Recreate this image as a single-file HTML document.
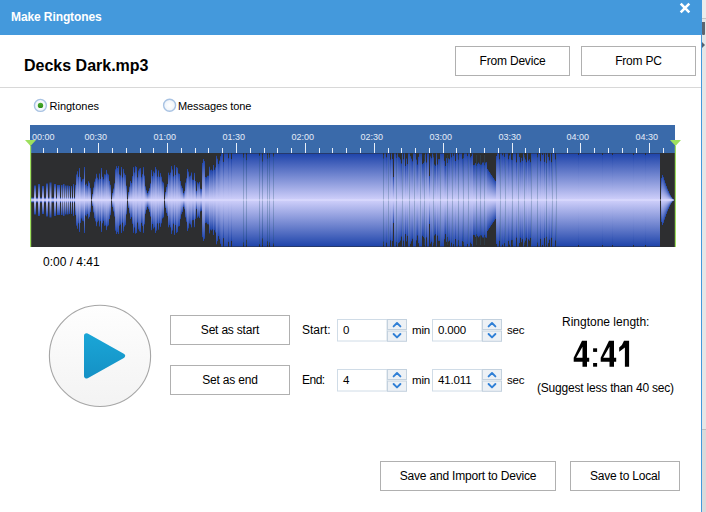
<!DOCTYPE html>
<html><head><meta charset="utf-8">
<style>
*{box-sizing:border-box;margin:0;padding:0}
html,body{width:706px;height:512px;overflow:hidden;background:#fff}
body{position:relative;font-family:"Liberation Sans",sans-serif;color:#000}
.a{position:absolute;white-space:nowrap}
.title{left:0;top:0;width:702px;height:35px;background:#4499dc}
.title .t{left:11px;top:11px;font-size:12px;font-weight:bold;letter-spacing:-0.1px;color:#fff;line-height:12px}
.bg{left:702px;top:0;width:4px;height:512px;background:#e6e6e6}
.bord{left:701px;top:35px;width:1px;height:477px;background:#4499dc}
.btn{position:absolute;border:1px solid #b0b0b0;background:#fff;font-size:12px;text-align:center;color:#000;letter-spacing:-0.2px}
.sep{left:0;top:87px;width:701px;height:1px;background:#d8d8d8}
.radio{position:absolute;width:13px;height:13px;border-radius:50%;border:1px solid #8fa7c8;background:#fff}
.spin{position:absolute;width:70px;height:22px;border:1px solid #c9d6e2;background:#fff}
.spin .v{position:absolute;left:5px;top:4px;font-size:12px;line-height:13px}
.up,.dn{position:absolute;left:49px;width:20px;height:10px;background:#eef1f4;border:1px solid #cdd7e0}
.up{top:0}.dn{top:11px}
.lbl{font-size:12px;line-height:13px}
</style></head><body>
<div class="a bg"></div>
<div class="a" style="left:702px;top:0;width:4px;height:18px;background:#ececec"></div>
<div class="a" style="left:702px;top:18px;width:4px;height:1px;background:#c4c4c4"></div>
<div class="a" style="left:702px;top:22px;width:2.5px;height:13px;background:#5c6570;border-radius:0 0 1px 1px"></div>
<div class="a" style="left:702px;top:42px;width:0;height:0;border-top:3px solid transparent;border-bottom:3px solid transparent;border-left:3px solid #56606c"></div>
<div class="a" style="left:702px;top:429px;width:4px;height:1px;background:#bdbdbd"></div>
<div class="a" style="left:702px;top:430px;width:4px;height:82px;background:#dadada"></div>
<div class="a title"><div class="a t">Make Ringtones</div>
<svg class="a" style="left:679.2px;top:2.4px" width="12" height="12" viewBox="0 0 12 12"><path d="M1.7,1.7 L10.3,10.3 M10.3,1.7 L1.7,10.3" stroke="#fff" stroke-width="2.6"/></svg>
</div>
<div class="a bord"></div>
<div class="a" style="left:24px;top:58px;font-size:16px;font-weight:bold;line-height:16px">Decks Dark.mp3</div>
<div class="btn" style="left:455px;top:46px;width:115px;height:30px;line-height:28px">From Device</div>
<div class="btn" style="left:581px;top:46px;width:115px;height:30px;line-height:28px">From PC</div>
<div class="a sep"></div>
<svg class="a" style="left:0;top:90px" width="200" height="30" viewBox="0 90 200 30">
<defs><radialGradient id="rg" cx="0.5" cy="0.5" r="0.5"><stop offset="0" stop-color="#fff"/><stop offset="1" stop-color="#eef3f9"/></radialGradient>
<linearGradient id="gd" x1="0" y1="0" x2="0" y2="1"><stop offset="0" stop-color="#4cb030"/><stop offset="1" stop-color="#2e8c18"/></linearGradient></defs>
<circle cx="40.4" cy="105.4" r="6" fill="url(#rg)" stroke="#a9c3e3" stroke-width="1.4"/>
<circle cx="40.5" cy="105.4" r="2.7" fill="url(#gd)"/>
<circle cx="169.6" cy="105.3" r="6" fill="url(#rg)" stroke="#a9c3e3" stroke-width="1.4"/>
</svg>
<div class="a lbl" style="left:49.5px;top:100px;font-size:11px">Ringtones</div>
<div class="a lbl" style="left:178px;top:100px;font-size:11px;letter-spacing:-0.1px">Messages tone</div>
<svg width="706" height="512" style="position:absolute;left:0;top:0">
<rect x="30" y="125" width="645" height="28" fill="#3a6aaa"/>
<rect x="43" y="148" width="1" height="5" fill="#e8eef8"/><rect x="57" y="148" width="1" height="5" fill="#e8eef8"/><rect x="71" y="148" width="1" height="5" fill="#e8eef8"/><rect x="84" y="148" width="1" height="5" fill="#e8eef8"/><rect x="98" y="143" width="1" height="10" fill="#e8eef8"/><rect x="112" y="148" width="1" height="5" fill="#e8eef8"/><rect x="126" y="148" width="1" height="5" fill="#e8eef8"/><rect x="140" y="148" width="1" height="5" fill="#e8eef8"/><rect x="153" y="148" width="1" height="5" fill="#e8eef8"/><rect x="167" y="143" width="1" height="10" fill="#e8eef8"/><rect x="181" y="148" width="1" height="5" fill="#e8eef8"/><rect x="195" y="148" width="1" height="5" fill="#e8eef8"/><rect x="208" y="148" width="1" height="5" fill="#e8eef8"/><rect x="222" y="148" width="1" height="5" fill="#e8eef8"/><rect x="236" y="143" width="1" height="10" fill="#e8eef8"/><rect x="250" y="148" width="1" height="5" fill="#e8eef8"/><rect x="264" y="148" width="1" height="5" fill="#e8eef8"/><rect x="277" y="148" width="1" height="5" fill="#e8eef8"/><rect x="291" y="148" width="1" height="5" fill="#e8eef8"/><rect x="305" y="143" width="1" height="10" fill="#e8eef8"/><rect x="319" y="148" width="1" height="5" fill="#e8eef8"/><rect x="332" y="148" width="1" height="5" fill="#e8eef8"/><rect x="346" y="148" width="1" height="5" fill="#e8eef8"/><rect x="360" y="148" width="1" height="5" fill="#e8eef8"/><rect x="374" y="143" width="1" height="10" fill="#e8eef8"/><rect x="388" y="148" width="1" height="5" fill="#e8eef8"/><rect x="401" y="148" width="1" height="5" fill="#e8eef8"/><rect x="415" y="148" width="1" height="5" fill="#e8eef8"/><rect x="429" y="148" width="1" height="5" fill="#e8eef8"/><rect x="443" y="143" width="1" height="10" fill="#e8eef8"/><rect x="456" y="148" width="1" height="5" fill="#e8eef8"/><rect x="470" y="148" width="1" height="5" fill="#e8eef8"/><rect x="484" y="148" width="1" height="5" fill="#e8eef8"/><rect x="498" y="148" width="1" height="5" fill="#e8eef8"/><rect x="512" y="143" width="1" height="10" fill="#e8eef8"/><rect x="525" y="148" width="1" height="5" fill="#e8eef8"/><rect x="539" y="148" width="1" height="5" fill="#e8eef8"/><rect x="553" y="148" width="1" height="5" fill="#e8eef8"/><rect x="567" y="148" width="1" height="5" fill="#e8eef8"/><rect x="580" y="143" width="1" height="10" fill="#e8eef8"/><rect x="594" y="148" width="1" height="5" fill="#e8eef8"/><rect x="608" y="148" width="1" height="5" fill="#e8eef8"/><rect x="622" y="148" width="1" height="5" fill="#e8eef8"/><rect x="636" y="148" width="1" height="5" fill="#e8eef8"/><rect x="649" y="143" width="1" height="10" fill="#e8eef8"/><rect x="663" y="148" width="1" height="5" fill="#e8eef8"/>
<g font-family="Liberation Sans" font-size="9" fill="#e4ecf8"><text x="32" y="140">00:00</text><text x="84.5" y="140">00:30</text><text x="153.5" y="140">01:00</text><text x="222.5" y="140">01:30</text><text x="291.5" y="140">02:00</text><text x="360.5" y="140">02:30</text><text x="429.5" y="140">03:00</text><text x="498.5" y="140">03:30</text><text x="566.5" y="140">04:00</text><text x="635.5" y="140">04:30</text></g>




</svg>
<svg width="706" height="512" style="position:absolute;left:0;top:0">
<defs><linearGradient id="wg" x1="0" y1="0" x2="0" y2="1">
<stop offset="0" stop-color="#1e44aa"/><stop offset="0.5" stop-color="#d0d0fb"/><stop offset="1" stop-color="#1e44aa"/></linearGradient></defs>
<rect x="30" y="153" width="645" height="94" fill="#2d2e30"/>
<g fill="url(#wg)"><rect x="31" y="197.5" width="44" height="5.0"/><rect x="75" y="184.9" width="1" height="30.2"/><rect x="76" y="174.4" width="1" height="51.3"/><rect x="77" y="171.2" width="1" height="57.6"/><rect x="78" y="176.8" width="1" height="46.5"/><rect x="79" y="168.0" width="1" height="64.0"/><rect x="80" y="177.0" width="1" height="46.0"/><rect x="81" y="181.5" width="1" height="37.0"/><rect x="82" y="179.1" width="1" height="41.7"/><rect x="83" y="178.8" width="1" height="42.4"/><rect x="84" y="167.0" width="1" height="66.0"/><rect x="85" y="184.7" width="1" height="30.7"/><rect x="86" y="183.6" width="1" height="32.8"/><rect x="87" y="185.9" width="1" height="28.3"/><rect x="88" y="181.2" width="1" height="37.5"/><rect x="89" y="182.8" width="1" height="34.3"/><rect x="90" y="187.9" width="1" height="24.2"/><rect x="92" y="194.0" width="1" height="12.0"/><rect x="93" y="187.5" width="1" height="24.9"/><rect x="94" y="181.7" width="1" height="36.5"/><rect x="95" y="178.6" width="1" height="42.8"/><rect x="96" y="173.8" width="1" height="52.4"/><rect x="97" y="177.7" width="1" height="44.5"/><rect x="98" y="179.4" width="1" height="41.3"/><rect x="99" y="173.5" width="1" height="53.0"/><rect x="100" y="178.9" width="1" height="42.3"/><rect x="101" y="168.0" width="1" height="64.0"/><rect x="102" y="176.8" width="1" height="46.5"/><rect x="103" y="179.2" width="1" height="41.6"/><rect x="104" y="174.2" width="1" height="51.6"/><rect x="105" y="174.5" width="1" height="51.0"/><rect x="106" y="169.9" width="1" height="60.2"/><rect x="107" y="173.6" width="1" height="52.8"/><rect x="108" y="174.6" width="1" height="50.8"/><rect x="109" y="180.9" width="1" height="38.1"/><rect x="110" y="184.8" width="1" height="30.4"/><rect x="112" y="193.0" width="1" height="14.0"/><rect x="113" y="188.5" width="1" height="23.0"/><rect x="114" y="183.3" width="1" height="33.3"/><rect x="115" y="169.3" width="1" height="61.4"/><rect x="116" y="166.1" width="1" height="67.9"/><rect x="117" y="168.0" width="1" height="64.1"/><rect x="118" y="166.0" width="1" height="68.0"/><rect x="119" y="174.4" width="1" height="51.3"/><rect x="120" y="175.4" width="1" height="49.2"/><rect x="121" y="167.0" width="1" height="66.0"/><rect x="122" y="177.4" width="1" height="45.3"/><rect x="123" y="168.9" width="1" height="62.3"/><rect x="124" y="173.3" width="1" height="53.3"/><rect x="125" y="174.9" width="1" height="50.3"/><rect x="126" y="185.7" width="1" height="28.7"/><rect x="128" y="192.0" width="1" height="16.0"/><rect x="129" y="186.7" width="1" height="26.6"/><rect x="130" y="181.0" width="1" height="38.0"/><rect x="131" y="182.9" width="1" height="34.3"/><rect x="132" y="176.1" width="1" height="47.7"/><rect x="133" y="167.1" width="1" height="65.8"/><rect x="134" y="172.5" width="1" height="55.0"/><rect x="135" y="166.2" width="1" height="67.5"/><rect x="136" y="167.0" width="1" height="66.0"/><rect x="137" y="177.3" width="1" height="45.3"/><rect x="138" y="170.5" width="1" height="58.9"/><rect x="139" y="168.7" width="1" height="62.6"/><rect x="140" y="168.0" width="1" height="64.0"/><rect x="141" y="177.2" width="1" height="45.7"/><rect x="142" y="174.2" width="1" height="51.7"/><rect x="143" y="167.1" width="1" height="65.8"/><rect x="144" y="175.6" width="1" height="48.8"/><rect x="145" y="186.3" width="1" height="27.5"/><rect x="146" y="190.2" width="1" height="19.7"/><rect x="147" y="193.0" width="1" height="14.0"/><rect x="148" y="191.0" width="1" height="18.0"/><rect x="149" y="188.1" width="1" height="23.9"/><rect x="150" y="183.4" width="1" height="33.2"/><rect x="151" y="169.9" width="1" height="60.3"/><rect x="152" y="176.1" width="1" height="47.9"/><rect x="153" y="171.4" width="1" height="57.2"/><rect x="154" y="172.8" width="1" height="54.5"/><rect x="155" y="167.0" width="1" height="66.0"/><rect x="156" y="169.3" width="1" height="61.4"/><rect x="157" y="176.6" width="1" height="46.8"/><rect x="158" y="170.4" width="1" height="59.3"/><rect x="159" y="176.8" width="1" height="46.4"/><rect x="160" y="173.1" width="1" height="53.8"/><rect x="161" y="176.7" width="1" height="46.6"/><rect x="162" y="181.5" width="1" height="37.0"/><rect x="163" y="182.6" width="1" height="34.9"/><rect x="165" y="192.0" width="1" height="16.0"/><rect x="166" y="186.9" width="1" height="26.2"/><rect x="167" y="184.0" width="1" height="32.0"/><rect x="168" y="172.6" width="1" height="54.7"/><rect x="169" y="174.9" width="1" height="50.2"/><rect x="170" y="172.6" width="1" height="54.8"/><rect x="171" y="166.0" width="1" height="68.0"/><rect x="172" y="169.5" width="1" height="61.0"/><rect x="173" y="176.3" width="1" height="47.4"/><rect x="174" y="165.1" width="1" height="69.8"/><rect x="175" y="174.9" width="1" height="50.2"/><rect x="176" y="167.0" width="1" height="66.0"/><rect x="177" y="167.8" width="1" height="64.3"/><rect x="178" y="173.4" width="1" height="53.2"/><rect x="179" y="173.8" width="1" height="52.3"/><rect x="180" y="181.0" width="1" height="38.1"/><rect x="181" y="185.6" width="1" height="28.7"/><rect x="182" y="188.0" width="1" height="24.0"/><rect x="183" y="193.0" width="1" height="14.0"/><rect x="184" y="190.9" width="1" height="18.3"/><rect x="185" y="182.6" width="1" height="34.8"/><rect x="186" y="178.3" width="1" height="43.5"/><rect x="187" y="169.0" width="1" height="62.0"/><rect x="188" y="171.6" width="1" height="56.8"/><rect x="189" y="176.5" width="1" height="47.0"/><rect x="190" y="175.6" width="1" height="48.9"/><rect x="191" y="172.5" width="1" height="54.9"/><rect x="192" y="179.6" width="1" height="40.7"/><rect x="193" y="179.9" width="1" height="40.2"/><rect x="194" y="172.9" width="1" height="54.3"/><rect x="195" y="181.0" width="1" height="37.9"/><rect x="196" y="190.8" width="1" height="18.3"/><rect x="197" y="182.2" width="1" height="35.6"/><rect x="198" y="183.4" width="1" height="33.2"/><rect x="199" y="181.9" width="1" height="36.2"/><rect x="200" y="188.6" width="1" height="22.8"/><rect x="201" y="189.1" width="1" height="21.7"/><rect x="202" y="162.9" width="1" height="74.3"/><rect x="203" y="159.0" width="1" height="82.0"/><rect x="204" y="161.1" width="1" height="77.7"/><rect x="205" y="177.0" width="1" height="46.1"/><rect x="206" y="177.3" width="1" height="45.4"/><rect x="207" y="175.8" width="1" height="48.4"/><rect x="208" y="175.7" width="1" height="48.7"/><rect x="209" y="166.7" width="1" height="66.7"/><rect x="210" y="170.2" width="1" height="59.5"/><rect x="211" y="169.5" width="1" height="61.0"/><rect x="212" y="170.5" width="1" height="59.0"/><rect x="213" y="165.0" width="1" height="70.0"/><rect x="214" y="169.8" width="1" height="60.4"/><rect x="215" y="167.4" width="1" height="65.1"/><rect x="216" y="155.8" width="1" height="88.5"/><rect x="217" y="158.7" width="1" height="82.5"/><rect x="218" y="163.9" width="1" height="72.2"/><rect x="219" y="160.6" width="1" height="78.7"/><rect x="220" y="156.2" width="1" height="87.6"/><rect x="221" y="153.5" width="2" height="93.0"/><rect x="223" y="161.9" width="1" height="76.3"/><rect x="224" y="153.5" width="4" height="93.0"/><rect x="228" y="158.2" width="1" height="83.6"/><rect x="229" y="153.5" width="2" height="93.0"/><rect x="231" y="159.1" width="1" height="81.8"/><rect x="232" y="153.5" width="11" height="93.0"/><rect x="243" y="157.6" width="1" height="84.8"/><rect x="244" y="153.5" width="2" height="93.0"/><rect x="246" y="160.1" width="1" height="79.8"/><rect x="247" y="153.5" width="12" height="93.0"/><rect x="259" y="156.0" width="1" height="88.0"/><rect x="260" y="153.5" width="2" height="93.0"/><rect x="262" y="161.5" width="1" height="76.9"/><rect x="263" y="153.5" width="4" height="93.0"/><rect x="267" y="158.7" width="1" height="82.6"/><rect x="268" y="153.5" width="1" height="93.0"/><rect x="269" y="157.6" width="1" height="84.8"/><rect x="270" y="153.5" width="3" height="93.0"/><rect x="273" y="156.6" width="1" height="86.8"/><rect x="274" y="153.5" width="109" height="93.0"/><rect x="383" y="158.5" width="1" height="83.1"/><rect x="384" y="153.5" width="2" height="93.0"/><rect x="386" y="157.3" width="1" height="85.4"/><rect x="387" y="153.5" width="3" height="93.0"/><rect x="390" y="159.6" width="1" height="80.8"/><rect x="391" y="153.5" width="1" height="93.0"/><rect x="392" y="159.0" width="1" height="82.1"/><rect x="393" y="177.0" width="1" height="46.0"/><rect x="394" y="153.5" width="2" height="93.0"/><rect x="396" y="157.9" width="1" height="84.2"/><rect x="397" y="153.5" width="1" height="93.0"/><rect x="398" y="156.8" width="1" height="86.4"/><rect x="399" y="157.7" width="1" height="84.5"/><rect x="400" y="159.4" width="1" height="81.2"/><rect x="401" y="163.5" width="1" height="73.1"/><rect x="402" y="153.5" width="1" height="93.0"/><rect x="403" y="159.2" width="1" height="81.5"/><rect x="404" y="153.5" width="1" height="93.0"/><rect x="405" y="165.9" width="1" height="68.2"/><rect x="406" y="158.5" width="1" height="82.9"/><rect x="407" y="164.1" width="1" height="71.7"/><rect x="408" y="153.5" width="2" height="93.0"/><rect x="410" y="156.2" width="1" height="87.6"/><rect x="411" y="158.7" width="1" height="82.6"/><rect x="412" y="161.3" width="1" height="77.5"/><rect x="413" y="153.5" width="3" height="93.0"/><rect x="416" y="159.6" width="1" height="80.8"/><rect x="417" y="164.5" width="1" height="71.0"/><rect x="418" y="156.8" width="1" height="86.4"/><rect x="419" y="153.5" width="3" height="93.0"/><rect x="422" y="164.1" width="1" height="71.7"/><rect x="423" y="163.0" width="1" height="74.1"/><rect x="424" y="161.4" width="1" height="77.1"/><rect x="425" y="153.5" width="1" height="93.0"/><rect x="426" y="162.5" width="1" height="74.9"/><rect x="427" y="153.5" width="2" height="93.0"/><rect x="429" y="176.0" width="1" height="48.0"/><rect x="430" y="156.4" width="1" height="87.2"/><rect x="431" y="158.2" width="1" height="83.6"/><rect x="432" y="153.5" width="1" height="93.0"/><rect x="433" y="157.3" width="1" height="85.4"/><rect x="434" y="164.5" width="1" height="71.0"/><rect x="435" y="165.7" width="1" height="68.5"/><rect x="436" y="153.5" width="1" height="93.0"/><rect x="437" y="164.5" width="1" height="71.1"/><rect x="438" y="159.1" width="2" height="81.8"/><rect x="440" y="153.5" width="4" height="93.0"/><rect x="444" y="160.8" width="1" height="78.5"/><rect x="445" y="165.9" width="1" height="68.2"/><rect x="446" y="158.1" width="1" height="83.7"/><rect x="447" y="163.0" width="1" height="74.0"/><rect x="448" y="158.3" width="1" height="83.3"/><rect x="449" y="159.2" width="1" height="81.5"/><rect x="450" y="153.5" width="1" height="93.0"/><rect x="451" y="157.3" width="1" height="85.4"/><rect x="452" y="153.5" width="1" height="93.0"/><rect x="453" y="155.7" width="1" height="88.5"/><rect x="454" y="153.5" width="1" height="93.0"/><rect x="455" y="161.0" width="1" height="78.0"/><rect x="456" y="153.5" width="2" height="93.0"/><rect x="458" y="159.7" width="1" height="80.5"/><rect x="459" y="153.5" width="3" height="93.0"/><rect x="462" y="158.8" width="1" height="82.3"/><rect x="463" y="158.1" width="1" height="83.9"/><rect x="464" y="153.5" width="3" height="93.0"/><rect x="467" y="156.1" width="1" height="87.8"/><rect x="468" y="153.5" width="2" height="93.0"/><rect x="470" y="157.3" width="1" height="85.4"/><rect x="471" y="156.0" width="1" height="88.0"/><rect x="472" y="153.5" width="1" height="93.0"/><rect x="473" y="165.1" width="1" height="69.8"/><rect x="474" y="164.8" width="1" height="70.3"/><rect x="475" y="163.1" width="1" height="73.8"/><rect x="476" y="165.7" width="1" height="68.6"/><rect x="477" y="163.9" width="1" height="72.2"/><rect x="478" y="162.6" width="1" height="74.7"/><rect x="479" y="163.8" width="1" height="72.5"/><rect x="480" y="164.8" width="1" height="70.5"/><rect x="481" y="164.5" width="1" height="71.0"/><rect x="482" y="162.6" width="1" height="74.8"/><rect x="483" y="162.4" width="1" height="75.2"/><rect x="484" y="165.2" width="1" height="69.7"/><rect x="485" y="162.6" width="1" height="74.8"/><rect x="486" y="162.1" width="1" height="75.7"/><rect x="487" y="169.0" width="1" height="62.0"/><rect x="488" y="170.5" width="1" height="59.0"/><rect x="489" y="172.0" width="1" height="56.0"/><rect x="490" y="173.5" width="1" height="53.0"/><rect x="491" y="175.0" width="1" height="50.0"/><rect x="492" y="176.5" width="1" height="47.0"/><rect x="493" y="178.0" width="1" height="44.0"/><rect x="494" y="179.5" width="1" height="41.0"/><rect x="495" y="181.0" width="1" height="38.0"/><rect x="496" y="156.0" width="1" height="88.0"/><rect x="497" y="153.5" width="2" height="93.0"/><rect x="499" y="159.2" width="1" height="81.6"/><rect x="500" y="153.5" width="2" height="93.0"/><rect x="502" y="155.3" width="1" height="89.4"/><rect x="503" y="153.5" width="1" height="93.0"/><rect x="504" y="156.8" width="1" height="86.4"/><rect x="505" y="153.5" width="3" height="93.0"/><rect x="508" y="159.2" width="1" height="81.7"/><rect x="509" y="155.4" width="1" height="89.2"/><rect x="510" y="153.5" width="1" height="93.0"/><rect x="511" y="159.7" width="1" height="80.5"/><rect x="512" y="160.1" width="1" height="79.8"/><rect x="513" y="153.5" width="3" height="93.0"/><rect x="516" y="162.3" width="1" height="75.4"/><rect x="517" y="153.5" width="2" height="93.0"/><rect x="519" y="157.0" width="1" height="86.0"/><rect x="520" y="162.3" width="1" height="75.5"/><rect x="521" y="157.8" width="1" height="84.4"/><rect x="522" y="160.8" width="1" height="78.4"/><rect x="523" y="153.5" width="1" height="93.0"/><rect x="524" y="157.4" width="1" height="85.2"/><rect x="525" y="159.4" width="1" height="81.2"/><rect x="526" y="162.2" width="1" height="75.6"/><rect x="527" y="153.5" width="1" height="93.0"/><rect x="528" y="160.6" width="1" height="78.8"/><rect x="529" y="159.2" width="1" height="81.5"/><rect x="530" y="162.2" width="1" height="75.7"/><rect x="531" y="153.5" width="6" height="93.0"/><rect x="537" y="157.3" width="1" height="85.3"/><rect x="538" y="153.5" width="2" height="93.0"/><rect x="540" y="161.2" width="1" height="77.7"/><rect x="541" y="153.5" width="1" height="93.0"/><rect x="542" y="155.0" width="1" height="90.0"/><rect x="543" y="153.5" width="1" height="93.0"/><rect x="544" y="161.8" width="1" height="76.3"/><rect x="545" y="153.5" width="1" height="93.0"/><rect x="546" y="163.1" width="1" height="73.7"/><rect x="547" y="153.5" width="1" height="93.0"/><rect x="548" y="156.9" width="1" height="86.2"/><rect x="549" y="160.4" width="1" height="79.3"/><rect x="550" y="153.5" width="1" height="93.0"/><rect x="551" y="162.2" width="1" height="75.6"/><rect x="552" y="153.5" width="3" height="93.0"/><rect x="555" y="159.4" width="1" height="81.1"/><rect x="556" y="153.5" width="22" height="93.0"/><rect x="578" y="155.0" width="1" height="90.0"/><rect x="579" y="153.5" width="23" height="93.0"/><rect x="602" y="155.0" width="1" height="90.0"/><rect x="603" y="153.5" width="9" height="93.0"/><rect x="612" y="155.0" width="1" height="90.0"/><rect x="613" y="153.5" width="20" height="93.0"/><rect x="633" y="155.0" width="1" height="90.0"/><rect x="634" y="153.5" width="11" height="93.0"/><rect x="645" y="155.0" width="1" height="90.0"/><rect x="646" y="153.5" width="14" height="93.0"/><rect x="660" y="200.0" width="1" height="0.0"/><rect x="661" y="178.0" width="1" height="44.0"/><rect x="662" y="175.0" width="1" height="50.0"/><rect x="663" y="177.1" width="1" height="45.8"/><rect x="664" y="180.2" width="1" height="39.5"/><rect x="665" y="183.2" width="1" height="33.6"/><rect x="666" y="186.0" width="1" height="28.0"/><rect x="667" y="188.6" width="1" height="22.8"/><rect x="668" y="191.0" width="1" height="18.0"/><rect x="669" y="193.2" width="1" height="13.6"/><rect x="670" y="195.2" width="1" height="9.6"/><rect x="671" y="196.9" width="1" height="6.2"/><rect x="672" y="198.3" width="1" height="3.4"/><rect x="673" y="199.3" width="1" height="1.5"/><rect x="34" y="185.5" width="2" height="29.0"/><rect x="38" y="184.0" width="2" height="32.0"/><rect x="42" y="186.0" width="2" height="28.0"/><rect x="46" y="183.5" width="2" height="33.0"/><rect x="49.5" y="182.5" width="2" height="35.0"/><rect x="54" y="184.0" width="2" height="32.0"/><rect x="57" y="185.0" width="3" height="30.0"/><rect x="61" y="185.0" width="1.5" height="30.0"/><rect x="63" y="184.0" width="1.5" height="32.0"/><rect x="65" y="185.5" width="1.5" height="29.0"/><rect x="67" y="185.5" width="1.5" height="29.0"/><rect x="69" y="186.0" width="1" height="28.0"/><rect x="71" y="186.0" width="1" height="28.0"/><rect x="73" y="184.0" width="1" height="32.0"/></g>
<g fill="#335f7c" opacity="0.3"><rect x="243" y="155" width="1" height="90"/><rect x="246" y="155" width="1" height="90"/><rect x="259" y="155" width="1" height="90"/><rect x="262" y="155" width="1" height="90"/><rect x="267" y="155" width="1" height="90"/><rect x="269" y="155" width="1" height="90"/><rect x="273" y="155" width="1" height="90"/><rect x="383" y="155" width="1" height="90"/><rect x="388" y="155" width="1" height="90"/><rect x="396" y="155" width="1" height="90"/><rect x="402" y="155" width="1" height="90"/><rect x="409" y="155" width="1" height="90"/><rect x="414" y="155" width="1" height="90"/><rect x="420" y="155" width="1" height="90"/><rect x="424" y="155" width="1" height="90"/><rect x="433" y="155" width="1" height="90"/><rect x="440" y="155" width="1" height="90"/><rect x="447" y="155" width="1" height="90"/><rect x="452" y="155" width="1" height="90"/><rect x="458" y="155" width="1" height="90"/><rect x="463" y="155" width="1" height="90"/><rect x="468" y="155" width="1" height="90"/><rect x="476" y="155" width="1" height="90"/><rect x="480" y="155" width="1" height="90"/><rect x="484" y="155" width="1" height="90"/><rect x="500" y="155" width="1" height="90"/><rect x="505" y="155" width="1" height="90"/><rect x="512" y="155" width="1" height="90"/><rect x="518" y="155" width="1" height="90"/><rect x="524" y="155" width="1" height="90"/><rect x="531" y="155" width="1" height="90"/><rect x="537" y="155" width="1" height="90"/><rect x="546" y="155" width="1" height="90"/><rect x="552" y="155" width="1" height="90"/><rect x="556" y="155" width="1" height="90"/></g>
<rect x="31" y="199.5" width="643" height="1" fill="#e6e6ff" opacity="0.7"/>
<rect x="30" y="146" width="1.2" height="101" fill="#9ee05e"/>
<rect x="674.8" y="146" width="1.2" height="101" fill="#9ee05e"/>
<path d="M25,140 L36,140 L30.5,146 Z" fill="#9ee05e"/>
<path d="M670,140 L681,140 L675.5,146 Z" fill="#9ee05e"/>
</svg>
<div class="a lbl" style="left:43px;top:256px">0:00 / 4:41</div>
<svg class="a" style="left:45px;top:301px" width="110" height="110" viewBox="0 0 110 110">
<defs><linearGradient id="pb" x1="0" y1="0" x2="0" y2="1"><stop offset="0" stop-color="#fefefe"/><stop offset="1" stop-color="#f3f3f3"/></linearGradient>
<linearGradient id="tri" x1="0" y1="0" x2="0" y2="1"><stop offset="0" stop-color="#1aa5d6"/><stop offset="1" stop-color="#1592c6"/></linearGradient></defs>
<circle cx="55" cy="54.9" r="50.6" fill="url(#pb)" stroke="#a6a6a6" stroke-width="1.1"/>
<path d="M41.5,34.8 L77.6,54.9 L41.5,75 Z" fill="url(#tri)" stroke="url(#tri)" stroke-width="5" stroke-linejoin="round"/>
</svg>
<div class="btn" style="left:170px;top:315px;width:120px;height:30px;line-height:28px">Set as start</div>
<div class="btn" style="left:170px;top:365px;width:120px;height:30px;line-height:28px">Set as end</div>
<div class="a lbl" style="left:302px;top:324px">Start:</div>
<div class="a lbl" style="left:302px;top:374px;letter-spacing:-0.5px">End:</div>
<svg class="a" style="left:337px;top:319px" width="70" height="23" viewBox="0 0 70 23">
<rect x="0.5" y="0.5" width="49.5" height="21.5" fill="#fff" stroke="#d0dce7"/>
<rect x="50.5" y="0.5" width="19" height="10" fill="#edf1f5" stroke="#c3d1de"/>
<rect x="50.5" y="12" width="19" height="10.3" fill="#edf1f5" stroke="#c3d1de"/>
<polyline points="56.6,7.4 60,4 63.4,7.4" fill="none" stroke="#2f7fd6" stroke-width="1.9" stroke-linecap="round" stroke-linejoin="round"/>
<polyline points="56.6,15 60,18.4 63.4,15" fill="none" stroke="#2f7fd6" stroke-width="1.9" stroke-linecap="round" stroke-linejoin="round"/>
</svg><div class="a lbl" style="left:343px;top:324px;font-size:11.5px;letter-spacing:-0.15px">0</div>
<div class="a lbl" style="left:412px;top:324px;font-size:11.5px;letter-spacing:-0.15px">min</div>
<svg class="a" style="left:432px;top:319px" width="70" height="23" viewBox="0 0 70 23">
<rect x="0.5" y="0.5" width="49.5" height="21.5" fill="#fff" stroke="#d0dce7"/>
<rect x="50.5" y="0.5" width="19" height="10" fill="#edf1f5" stroke="#c3d1de"/>
<rect x="50.5" y="12" width="19" height="10.3" fill="#edf1f5" stroke="#c3d1de"/>
<polyline points="56.6,7.4 60,4 63.4,7.4" fill="none" stroke="#2f7fd6" stroke-width="1.9" stroke-linecap="round" stroke-linejoin="round"/>
<polyline points="56.6,15 60,18.4 63.4,15" fill="none" stroke="#2f7fd6" stroke-width="1.9" stroke-linecap="round" stroke-linejoin="round"/>
</svg><div class="a lbl" style="left:438px;top:324px;font-size:11.5px;letter-spacing:-0.15px">0.000</div>
<div class="a lbl" style="left:507px;top:324px;font-size:11.5px;letter-spacing:-0.15px">sec</div>
<svg class="a" style="left:337px;top:369px" width="70" height="23" viewBox="0 0 70 23">
<rect x="0.5" y="0.5" width="49.5" height="21.5" fill="#fff" stroke="#d0dce7"/>
<rect x="50.5" y="0.5" width="19" height="10" fill="#edf1f5" stroke="#c3d1de"/>
<rect x="50.5" y="12" width="19" height="10.3" fill="#edf1f5" stroke="#c3d1de"/>
<polyline points="56.6,7.4 60,4 63.4,7.4" fill="none" stroke="#2f7fd6" stroke-width="1.9" stroke-linecap="round" stroke-linejoin="round"/>
<polyline points="56.6,15 60,18.4 63.4,15" fill="none" stroke="#2f7fd6" stroke-width="1.9" stroke-linecap="round" stroke-linejoin="round"/>
</svg><div class="a lbl" style="left:343px;top:374px;font-size:11.5px;letter-spacing:-0.15px">4</div>
<div class="a lbl" style="left:412px;top:374px;font-size:11.5px;letter-spacing:-0.15px">min</div>
<svg class="a" style="left:432px;top:369px" width="70" height="23" viewBox="0 0 70 23">
<rect x="0.5" y="0.5" width="49.5" height="21.5" fill="#fff" stroke="#d0dce7"/>
<rect x="50.5" y="0.5" width="19" height="10" fill="#edf1f5" stroke="#c3d1de"/>
<rect x="50.5" y="12" width="19" height="10.3" fill="#edf1f5" stroke="#c3d1de"/>
<polyline points="56.6,7.4 60,4 63.4,7.4" fill="none" stroke="#2f7fd6" stroke-width="1.9" stroke-linecap="round" stroke-linejoin="round"/>
<polyline points="56.6,15 60,18.4 63.4,15" fill="none" stroke="#2f7fd6" stroke-width="1.9" stroke-linecap="round" stroke-linejoin="round"/>
</svg><div class="a lbl" style="left:438px;top:374px;font-size:11.5px;letter-spacing:-0.15px">41.011</div>
<div class="a lbl" style="left:507px;top:374px;font-size:11.5px;letter-spacing:-0.15px">sec</div>
<div class="a lbl" style="left:562px;top:316px">Ringtone length:</div>
<svg class="a" style="left:0;top:0" width="706" height="512"><g fill="#000" fill-rule="evenodd">
<path d="M582.0,340.8 L587.0,340.8 L587.0,357.8 L589.2,357.8 L589.2,361.8 L587.0,361.8 L587.0,366.8 L582.5,366.8 L582.5,361.8 L573.7,361.8 L573.7,357.7 Z M582.5,346.8 L582.5,357.8 L576.2,357.8 Z"/>
<path d="M609.0,340.8 L614.0,340.8 L614.0,357.8 L616.2,357.8 L616.2,361.8 L614.0,361.8 L614.0,366.8 L609.5,366.8 L609.5,361.8 L600.7,361.8 L600.7,357.7 Z M609.5,346.8 L609.5,357.8 L603.2,357.8 Z"/>
<rect x="593.1" y="348.3" width="4" height="3.6"/>
<rect x="593.1" y="363.0" width="4" height="3.7"/>
<path d="M629.1,340.8 L629.1,366.8 L624.9,366.8 L624.9,347.6 L619.2,351.7 L619.2,347.5 Q622.6,345.2 624,340.8 Z"/>
</g></svg>
<div class="a lbl" style="left:537px;top:382px;letter-spacing:-0.2px">(Suggest less than 40 sec)</div>
<div class="btn" style="left:380px;top:461px;width:176px;height:30px;line-height:28px">Save and Import to Device</div>
<div class="btn" style="left:570px;top:461px;width:110px;height:30px;line-height:28px">Save to Local</div>
</body></html>
